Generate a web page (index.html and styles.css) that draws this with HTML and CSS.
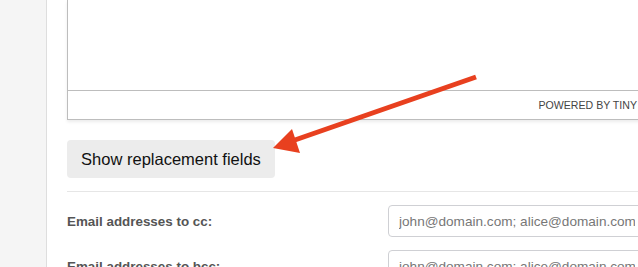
FILE: index.html
```html
<!DOCTYPE html>
<html lang="en">
<head>
  <meta charset="UTF-8">
  <meta name="viewport" content="width=device-width, initial-scale=1.0">
  <title>Email template</title>
  <link rel="stylesheet" href="styles.css">
</head>
<body>
  <div class="layout">
    <aside class="sidebar"></aside>
    <main class="content">
      <div class="editor">
        <div class="editor-area"></div>
        <div class="statusbar">POWERED BY TINY</div>
      </div>

      <button class="btn-fields">Show replacement fields</button>

      <div class="form">
        <div class="form-row">
          <label for="cc">Email addresses to cc:</label>
          <input type="text" id="cc" placeholder="john@domain.com; alice@domain.com">
        </div>
        <div class="form-row">
          <label for="bcc">Email addresses to bcc:</label>
          <input type="text" id="bcc" placeholder="john@domain.com; alice@domain.com">
        </div>
      </div>
    </main>
  </div>

  <!-- annotation arrow -->
  <svg class="arrow" width="638" height="267" viewBox="0 0 638 267">
    <line x1="476" y1="77" x2="292" y2="141" stroke="#e8401f" stroke-width="5"/>
    <polygon points="273,148 292,129 300,153" fill="#e8401f"/>
  </svg>
</body>
</html>
```

FILE: styles.css
```css
body {
  margin: 0;
  padding: 0;
  font-family: "Liberation Sans", Arial, sans-serif;
  background-color: white;
  width: 638px;
  height: 267px;
  overflow: hidden;
  position: relative;
}
.layout {
  display: flex;
  height: 267px;
}
.sidebar {
  width: 46px;
  flex-shrink: 0;
  background-color: #f5f5f5;
  border-right: 1px solid #dedede;
}
.content {
  flex-shrink: 0;
  width: 579px;
  padding-left: 20px;
}
.editor {
  border: 1px solid #bdbdbd;
  border-top: none;
  box-shadow: 0 2px 3px rgba(0, 0, 0, 0.08);
}
.editor-area {
  height: 90px;
}
.statusbar {
  height: 28px;
  border-top: 1px solid #bdbdbd;
  display: flex;
  align-items: center;
  justify-content: flex-end;
  padding-right: 8px;
  font-size: 10.6px;
  color: #444;
}
.btn-fields {
  margin-top: 20px;
  width: 208px;
  height: 38px;
  border: none;
  border-radius: 4px;
  background-color: #ececec;
  font-family: "Liberation Sans", Arial, sans-serif;
  font-size: 16.5px;
  color: #111;
  padding: 0;
}
.form {
  margin-top: 13px;
  border-top: 1px solid #e6e6e6;
  padding-top: 13px;
  display: flex;
  flex-direction: column;
  gap: 13px;
}
.form-row {
  display: flex;
  align-items: center;
}
.form-row label {
  width: 321px;
  flex-shrink: 0;
  font-size: 13.4px;
  font-weight: bold;
  color: #555;
}
.form-row input {
  width: 280px;
  height: 32px;
  box-sizing: border-box;
  border: 1px solid #cfd0d4;
  border-radius: 4px;
  padding: 0 10px;
  font-family: "Liberation Sans", Arial, sans-serif;
  font-size: 13.6px;
}
.form-row input::placeholder {
  color: #777;
}
.arrow {
  position: absolute;
  left: 0;
  top: 0;
  pointer-events: none;
}
```
